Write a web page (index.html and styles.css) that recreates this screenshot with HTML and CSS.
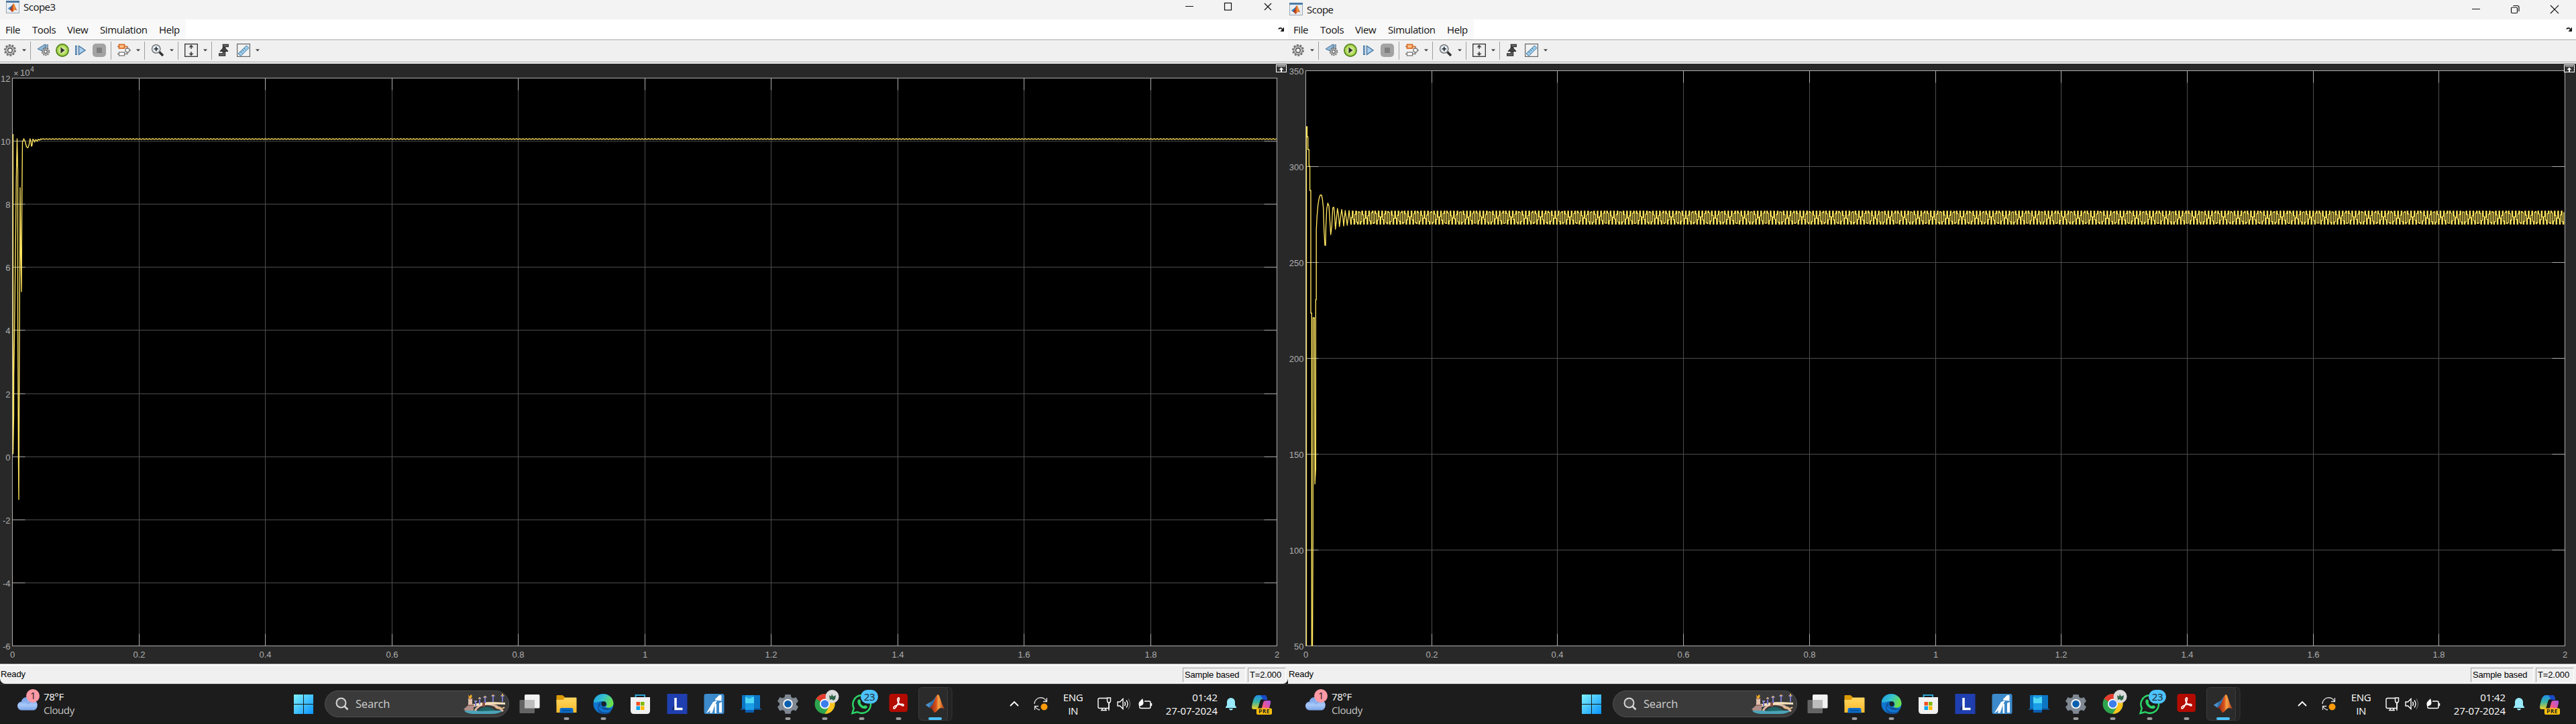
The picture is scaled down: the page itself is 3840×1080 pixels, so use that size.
FILE: index.html
```html
<!DOCTYPE html>
<html lang="en">
<head>
<meta charset="utf-8">
<title>Scopes</title>
<link rel="stylesheet" href="styles.css">
</head>
<body>
<svg class="defs" width="0" height="0" aria-hidden="true">
  <defs>
    <linearGradient id="gWin" x1="0" y1="0" x2="1" y2="1"><stop offset="0" stop-color="#7df3ff"/><stop offset="1" stop-color="#0a93fb"/></linearGradient>
    <linearGradient id="gOrange" x1="0" y1="0" x2="1" y2="0"><stop offset="0" stop-color="#7c1f17"/><stop offset=".45" stop-color="#d9541e"/><stop offset=".6" stop-color="#f9a646"/><stop offset="1" stop-color="#a92a14"/></linearGradient>
    <linearGradient id="gFolder" x1="0" y1="0" x2="0" y2="1"><stop offset="0" stop-color="#ffd860"/><stop offset="1" stop-color="#fcb92c"/></linearGradient>
    <linearGradient id="gEdge" x1="0" y1="0" x2="1" y2=".4"><stop offset="0" stop-color="#1b9de2"/><stop offset=".5" stop-color="#35c1d0"/><stop offset="1" stop-color="#6be04c"/></linearGradient>
    <linearGradient id="gCloud" x1="0" y1="0" x2="0" y2="1"><stop offset="0" stop-color="#6f9be8"/><stop offset=".6" stop-color="#a8c9f8"/><stop offset="1" stop-color="#7ba3e6"/></linearGradient>
    <linearGradient id="gCopA" x1="0" y1="0" x2="0" y2="1"><stop offset="0" stop-color="#1f8fe8"/><stop offset=".5" stop-color="#3db5a0"/><stop offset="1" stop-color="#f3cf1f"/></linearGradient>
    <linearGradient id="gCopB" x1="1" y1="0" x2="0" y2="1"><stop offset="0" stop-color="#a057f0"/><stop offset=".6" stop-color="#f0568d"/><stop offset="1" stop-color="#ff9a4c"/></linearGradient>
    <radialGradient id="gPlay" cx=".5" cy=".5" r=".5"><stop offset="0" stop-color="#f1f8d8"/><stop offset=".7" stop-color="#b4dc5a"/><stop offset="1" stop-color="#7db32a"/></radialGradient>
    <symbol id="membrane" viewBox="0 0 30 28">
      <path d="M0 16 8 11.5 14 8.500 11 17 6 20.500Z" fill="#4a8fc7"/>
      <path d="M8 11.500C12 10 14 5 17.500 1L14.500 13 9.500 20 6 20.500Z" fill="#2f6fa8"/>
      <path d="M6 20.500C10 18 12 14 14 9 16 4 17.500 0 19.500 0 22 0 24 13 30 23 26 20 23 20 20 23 18 25 16 28 13.500 28 12 25 10 21 6 20.500Z" fill="url(#gOrange)"/>
    </symbol>
    <symbol id="appicon" viewBox="0 0 20 19">
      <rect x=".5" y=".5" width="19" height="18" fill="#e9eef3" stroke="#9aa7b3"/>
      <rect x="0" y="0" width="20" height="3" fill="#4b7ba8"/>
      <use href="#membrane" x="2" y="4" width="15" height="13"/>
    </symbol>
    <symbol id="caret" viewBox="0 0 10 10"><path d="M2 3.500h6L5 6.500Z" fill="#333"/></symbol>
    <symbol id="cog" viewBox="0 0 20 20">
      <circle cx="10" cy="10" r="7.800" fill="none" stroke="#6d6d6d" stroke-width="2.200" stroke-dasharray="3 1.900"/>
      <circle cx="10" cy="10" r="6.400" fill="#d4d4d4" stroke="#777" stroke-width="1.200"/>
      <circle cx="10" cy="10" r="3.400" fill="#f4f4f4" stroke="#555" stroke-width="1.600"/>
    </symbol>
  </defs>
</svg>

<main class="desktop">
  <section class="screen" data-scope="current">
    <header class="titlebar titlebar-a">
      <svg class="appicon" width="20" height="19"><use href="#appicon"/></svg>
      <h1>Scope3</h1>
      <svg class="winctl" width="130" height="20" fill="none" stroke="#111" stroke-width="1.200"><path d="M2 9.500h12M120 5l10 10m0-10L120 15"/><rect x="60.500" y="4.500" width="10" height="10.500"/></svg>
    </header>
    <div class="chrome"></div>
    <svg class="plot" viewBox="0 95 1920 895" width="1920" height="895"></svg>
    <footer class="status rounded"><span>Ready</span><span class="cell sample">Sample based</span><span class="cell time">T=2.000</span></footer>
    <div class="taskbar"></div>
  </section>
  <section class="screen" data-scope="voltage">
    <header class="titlebar titlebar-b">
      <svg class="appicon" width="20" height="19"><use href="#appicon"/></svg>
      <h1>Scope</h1>
      <svg class="winctl" width="130" height="20" fill="none" stroke="#111" stroke-width="1.200"><path d="M2 9.500h12M119 4l12 12m0-12L119 16M63.500 4.500h6q2.500 0 2.500 2.500v6"/><rect x="60.500" y="7" width="9" height="8.500" rx="1.500"/></svg>
    </header>
    <div class="chrome"></div>
    <svg class="plot" viewBox="0 95 1920 895" width="1920" height="895"></svg>
    <footer class="status"><span>Ready</span><span class="cell sample">Sample based</span><span class="cell time">T=2.000</span></footer>
    <div class="taskbar"></div>
  </section>
</main>

<template id="chrome">
  <nav class="menubar">
    <ul><li class="m-file">File</li><li class="m-tools">Tools</li><li class="m-view">View</li><li class="m-sim">Simulation</li><li>Help</li></ul>
    <svg class="dock" width="10" height="8"><path d="M1 3.500C2.500 1 5 1.500 6.500 3.500" fill="none" stroke="#111" stroke-width="1.800"/><path d="M9 .5V7H3.500Z" fill="#111"/></svg>
  </nav>
  <div class="toolbar">
    <svg width="20" height="20"><use href="#cog"/></svg>
    <svg class="caret" width="10" height="10"><use href="#caret"/></svg>
    <i class="sep"></i>
    <div class="group">
      <svg width="20" height="20"><path d="M1 8 12 1v12Z" fill="#8fb8d8" stroke="#50789c"/><path d="M13.500 1v10M16 1v8" stroke="#50789c" stroke-width="1.500"/><use href="#cog" x="6" y="5" width="14" height="14"/></svg>
      <svg width="20" height="20"><circle cx="10" cy="10" r="9.200" fill="url(#gPlay)" stroke="#4d7d1c" stroke-width="1.500"/><path d="M7.500 5.500v9l6-4.500Z" fill="#333"/></svg>
      <svg width="20" height="20"><path d="M7.500 3.500 17 10 7.500 16.500Z" fill="#a9cfee" stroke="#3f6f9c" stroke-width="1.300"/><path d="M3.500 3v14" stroke="#3f6f9c" stroke-width="3"/><path d="M3.500 4v12" stroke="#a9cfee"/></svg>
      <svg width="20" height="20"><rect width="20" height="20" rx="5" fill="#a3a3a3"/><rect x="6" y="6" width="8" height="8" fill="#7f7f7f"/></svg>
    </div>
    <i class="sep after-group"></i>
    <svg width="20" height="20" fill="none" stroke="#777" stroke-width="1.300"><path d="M0 4.500h15v4M0 15.500h15v-4"/><path d="M10 4.500h4.500V8" stroke="#e0702a"/><rect x="2.500" y="1.500" width="8" height="5.500" fill="#ffc58f" stroke="#dd6a1f" stroke-width="1.800"/><rect x="2.500" y="13" width="8" height="5" fill="#fff"/><circle cx="15" cy="10" r="3" fill="#fff"/><path d="M18 10h2"/></svg>
    <svg class="caret" width="10" height="10"><use href="#caret"/></svg>
    <i class="sep"></i>
    <svg width="20" height="20" fill="none"><path d="m12 12 6 6" stroke="#333" stroke-width="3.500"/><circle cx="7.700" cy="8" r="6.200" fill="#e4eff6" stroke="#777" stroke-width="1.500"/><path d="M4.500 8H11M7.700 4.800v6.400" stroke="#222" stroke-width="1.700"/></svg>
    <svg class="caret" width="10" height="10"><use href="#caret"/></svg>
    <i class="sep"></i>
    <svg width="20" height="20"><rect x=".7" y=".7" width="18.600" height="18.600" fill="#eee" stroke="#333" stroke-width="1.300"/><path d="M10 1.500 13.500 5.500h-7ZM10 18.500l3.500-4h-7Z" fill="#444"/><path d="M10 4v4M10 12v4" stroke="#444" stroke-width="1.500"/></svg>
    <svg class="caret" width="10" height="10"><use href="#caret"/></svg>
    <i class="sep"></i>
    <div class="group">
      <svg width="20" height="20" fill="none"><path d="M1 16.500h8V3h7" stroke="#333" stroke-width="4.500"/><path d="M2 16.500h7V3h6" stroke="#777" stroke-width="1.300"/><path d="M3 11.500 9 5l6 6.500Z" fill="#444" stroke="#222"/></svg>
      <svg width="20" height="20"><rect x=".6" y=".6" width="18.800" height="18.800" fill="#f2f2f2" stroke="#666" stroke-width="1.200"/><path d="M2 15 14.500 3 18 6.500 6 18.500Z" fill="#9ccbea" stroke="#42769b"/><path d="m6 12 1.500 1.500m1-4 1.500 1.500M11 7l1.500 1.500" stroke="#2e6288"/></svg>
    </div>
    <svg class="caret" width="10" height="10"><use href="#caret"/></svg>
  </div>
</template>

<template id="taskbar">
  <div class="weather">
    <svg width="35" height="36"><path d="M8 32.500a6.500 6.500 0 0 1-1-13C8 12 20 10 24 18c9-1 9 14.500 0 14.500Z" fill="url(#gCloud)"/><path d="M6 21c5-3 9-1 11 2 2-4 5-4 8-4" fill="none" stroke="#84a9ea" stroke-width="1.500"/><circle cx="24" cy="11" r="10" fill="#ff99a4"/><text x="24" y="16" text-anchor="middle" class="badge">1</text></svg>
    <div><p>78°F</p><p class="dim">Cloudy</p></div>
  </div>
  <div class="apps">
    <svg class="app" viewBox="0 0 55 50"><path d="M13 11h14v14H13zM28 11h14v14H28zM13 26h14v14H13zM28 26h14v14H28z" fill="url(#gWin)"/></svg>
    <div class="search">
      <svg width="20" height="20" fill="none" stroke="#d5d5d5" stroke-width="2"><circle cx="8.500" cy="8.500" r="7" fill="#4c4c4c"/><path d="m13.500 13.500 5 5" stroke-width="2.600"/></svg>
      <span>Search</span>
      <svg class="bridge" width="64" height="32" fill="none">
        <path d="M2 26h58Q54 31 42 31H14Q4 30 2 26Z" fill="#4ba3b8"/>
        <path d="M22 27C28 19 38 18 48 26" fill="#1f6464"/>
        <path d="M18 26C25 14 44 12 60 27" stroke="#e0bba6" stroke-width="3"/>
        <path d="M12 17C26 14 34 12 63 14v3C38 16 26 18 14 21Z" fill="#f8e2bd"/>
        <path d="M48 20c3 4 6 3 8 1M54 20c3 4 6 3 8 1" stroke="#e2b880" stroke-width="2"/>
        <path d="M1 24 8 18h8v8H4Z" fill="#b08e88"/><path d="M8 8h6v10H8Z" fill="#e2c0ac"/><path d="M7 8h8M7 18h10" stroke="#86615a" stroke-width="1.600"/>
        <path d="m8 2 2 3 2-3 2 2-2 4H9Z" fill="#f0ad27"/>
        <path d="M19 13v6M25 10v7M33 7v8M45 5v8M59 5v8" stroke="#7877cc" stroke-width="2"/>
        <path d="M17 12h4M23 8h4M30.500 6h5M42.500 4h5M56.500 4h5" stroke="#9b8fc8" stroke-width="2"/>
        <path d="M45 2v2M33 4v2M25 6v2M59 1v3" stroke="#e9b255" stroke-width="2"/>
        <path d="M29 14h4v6h-4Z" fill="#8c5148"/>
      </svg>
    </div>
    <svg class="app" viewBox="0 0 55 50"><rect x="20" y="11" width="22.500" height="20.500" rx="1.500" fill="#f2f2f2"/><rect x="12.500" y="19" width="22.500" height="20" rx="1.500" fill="#777" fill-opacity=".8"/><path d="M20 19h15v12.500H20z" fill="#bdbdbd"/></svg>
    <svg class="app open" viewBox="0 0 55 50"><path d="M12.500 13q0-1 1-1h8l4 3.500v8h-13Z" fill="#dc9b08"/><path d="M12.500 19H22l3.500-3.500h16q1 0 1 1V38H12.500Z" fill="url(#gFolder)"/><path d="M17.500 38.500V34q0-3 3-3h14q3 0 3 3v4.500Z" fill="#0b6cc9"/><path d="M21 35h13" stroke="#074a91" stroke-width="1.500"/><rect class="dot" x="23.500" y="45" width="8" height="4" rx="2"/></svg>
    <svg class="app open" viewBox="0 0 55 50"><circle cx="27.500" cy="25" r="15" fill="#0f76cf"/><path d="M12.800 22C14.500 6 41 6 42.500 24c0 6-6 8-12 6 4-3 2-9-4-9-8 0-12 4-13.700 1Z" fill="url(#gEdge)"/><path d="M20 29c0 9 13 11 20 6-4 6-11 6-15 4.500C17 37 17 24 25 21.500c-3 2-3 6-1 9 3 4 9 5 16 2" fill="#134f9c"/><circle cx="28" cy="25" r="3.700" fill="#17222c"/><rect class="dot" x="23.500" y="45" width="8" height="4" rx="2"/></svg>
    <svg class="app" viewBox="0 0 55 50"><path d="M20.500 16v-4.200h13.500V16" fill="none" stroke="#2cb9ee" stroke-width="1.800"/><path d="M13 15h29v20q0 5-5 5H18q-5 0-5-5Z" fill="#f1f1f1"/><path d="M21.500 22h5.500v5.500h-5.500z" fill="#f25022"/><path d="M28 22h5.500v5.500H28z" fill="#7fba00"/><path d="M21.500 28.500h5.500V34h-5.500z" fill="#00a4ef"/><path d="M28 28.500h5.500V34H28z" fill="#ffb900"/></svg>
    <svg class="app" viewBox="0 0 55 50"><rect x="12.500" y="10" width="30" height="30" fill="#1f3fb0"/><path d="m20 34 4-10v10Z" fill="#0d2059"/><path d="M25 16v16.500h10.500" fill="none" stroke="#fff" stroke-width="3.500"/></svg>
    <svg class="app" viewBox="0 0 55 50"><rect x="12.500" y="10" width="30" height="30" rx="3" fill="#3c8acb"/><path d="M16 38.500 26 22l6-2-3.500 7-4 11.500h-3.500l1-4-5 4Z" fill="#fff"/><path d="m29 18 6-6h3.500v8.500l-9.500-1Z" fill="#fff"/><path d="M35 24l4-2v16h-4Z" fill="#fff"/><path d="M28.500 25h2.500v14h-2.500Z" fill="#fff"/></svg>
    <svg class="app" viewBox="0 0 55 50"><path d="M14 12h27v20H14Z" fill="#0c76c4"/><path d="M12 32h31v2H12Z" fill="#0e4e91"/><path d="M19 12h13v22H19Z" fill="#1b9de8"/><path d="M19 15h13v9H19Z" fill="#4fd7f5"/><path d="M19 34h13v4H19Z" fill="#0a5bb0"/><path d="M22 16h6" stroke="#087ac5"/></svg>
    <svg class="app open" viewBox="0 0 55 50"><path d="M23.500 11h8l1 4 3 1.600 4-1.500 3.500 6-3 3v2.500l3 3-3.500 6-4-1.500-3 1.600-1 4h-8l-1-4-3-1.600-4 1.500-3.500-6 3-3V24l-3-3 3.500-6 4 1.500 3-1.600Z" fill="#7f8892"/><circle cx="27.500" cy="25" r="7.300" fill="#f0f3f6"/><circle cx="27.500" cy="25" r="5.300" fill="#0c5fae"/><rect class="dot" x="23.500" y="45" width="8" height="4" rx="2"/></svg>
    <svg class="app open" viewBox="0 0 55 50"><circle cx="27.500" cy="25" r="15" fill="#2da54e"/><path d="M27.500 25 14.500 17.500A15 15 0 0 1 40.500 17.500H27.500Z" fill="#e33b2e"/><path d="M27.500 17.500h13A15 15 0 0 1 27.500 40L34 28.700Z" fill="#fcc31e"/><circle cx="27.500" cy="25" r="7.500" fill="#fff"/><circle cx="27.500" cy="25" r="5.800" fill="#3b7ded"/><circle cx="38.500" cy="14" r="10" fill="#dcdcdc"/><path d="m34 12 3 2 1-4 2 4 4-2-1 6-3 2-2-2-3 1Z" fill="#2d6446"/><rect class="dot" x="23.500" y="45" width="8" height="4" rx="2"/></svg>
    <svg class="app open" viewBox="0 0 55 50"><path d="m13.500 39 2.300-7.500A13.300 13.300 0 1 1 21 37Z" fill="none" stroke="#2bd366" stroke-width="2.500"/><path d="M21.500 20c1-3 4-2 4.500 1 .3 2-1 2 0 3.500s2.500 3 4 3.500 2-1.500 4-.5c3 1.300 2 3.500 0 4.500-6 2-14-6-12.500-12Z" fill="#2bd366"/><rect x="26" y="4" width="26" height="20.500" rx="10.200" fill="#4cc2ff"/><text x="39" y="19.500" text-anchor="middle" class="badge">23</text><rect class="dot" x="23.500" y="45" width="8" height="4" rx="2"/></svg>
    <svg class="app open" viewBox="0 0 55 50"><rect x="13.500" y="10" width="27.500" height="27" rx="4" fill="#b30b00"/><path d="M20 31c0-4 15-8 15-4 0 3-10-3-9-9 .7-4 3.500-2 2 2-1.500 5-5 12-7 12q-1 0-1-1Z" fill="none" stroke="#fff" stroke-width="1.700"/><rect class="dot" x="23.500" y="45" width="8" height="4" rx="2"/></svg>
    <svg class="app" viewBox="0 0 55 50"><rect x="5" y=".5" width="47" height="49" rx="5" fill="#232323" stroke="#363636"/><rect x="2.500" y=".5" width="43" height="49" rx="5" fill="#2b2b2b" stroke="#3d3d3d"/><use href="#membrane" x="12.500" y="11" width="29" height="27"/><rect x="17" y="45" width="20" height="4" rx="2" fill="#4cc2ff"/></svg>
  </div>
  <div class="tray">
    <svg class="chev" width="14" height="10"><path d="m1 8 6-6 6 6" fill="none" stroke="#fff" stroke-width="1.800"/></svg>
    <svg class="sync" width="22" height="22" fill="none" stroke="#ddd" stroke-width="1.300"><path d="M1 11a9.500 9.500 0 0 1 18-4M19.500 2v5.500H14M1.500 20v-5.500H7M2 15a9.500 9.500 0 0 0 7 5"/><circle cx="15.500" cy="15.500" r="5" fill="#ff9a0a" stroke="none"/></svg>
    <div class="lang"><p>ENG</p><p>IN</p></div>
    <svg class="net" width="21" height="21" fill="none" stroke="#fff" stroke-width="1.400"><path d="M14 1.500H3q-2 0-2 2v11q0 2 2 2h14V9M5 19.500h9M7 17v2M12 17v2"/><path d="M14.500 1h5v4.500l-1 2.500h-3l-1-2.500ZM17 8v12"/></svg>
    <svg class="vol" width="22" height="20" fill="none" stroke="#fff" stroke-width="1.400"><path d="M1 7h3.500L9 2.500v15L4.500 13H1ZM11.500 7q2 3 0 6M14 4.500q4 5.500 0 11"/><path d="M17 2.500q5 7.500 0 15" stroke="#666"/></svg>
    <svg class="bat" width="22" height="20" fill="none" stroke="#fff" stroke-width="1.500"><path d="M10 6h7q2 0 2 2v6.500q0 2-2 2H5q-2 0-2-1.500M20.500 9v4"/><path d="M2 13C0 7 4 6 7 2c2 5 3 10-3 11l-2 3Z" fill="#fff" stroke="none"/></svg>
    <div class="clock"><p>01:42</p><p>27-07-2024</p></div>
    <svg class="bell" width="16" height="20"><path d="M0 15 2 12V7a6 6 0 0 1 12 0v5l2 3v1H0ZM5 17h6q-.5 2.500-3 2.500T5 17Z" fill="#99ebff"/></svg>
    <svg class="copilot" width="30" height="29"><path d="M0 18C1 10 3 4 5 2q1-2 4-2h10q3 0 4 6H15q-2 0-3 4l-2 7q-1 4-4 4H3q-3 0-3-3Z" fill="url(#gCopA)"/><path d="M13 0h6q3 0 4 7h-6Z" fill="#1847c9"/><path d="M17 11q1-3 4-3h5q3 0 2 4l-2 8q-1 3-4 3h-8Z" fill="url(#gCopB)"/><rect x="7" y="19.500" width="23" height="9.500" rx="2" fill="#ffc20e"/><text x="18.500" y="27.200" text-anchor="middle" class="pre">PRE</text></svg>
  </div>
</template>
<script src="app.js"></script>
</body>
</html>
```
FILE: styles.css
```css
* { box-sizing: border-box; }
body, h1, p, ul { margin: 0; padding: 0; }
body { width: 3840px; height: 1080px; overflow: hidden; background: #1c1c1c; font-family: "Open Sans", "Noto Sans", sans-serif; }
.defs { position: absolute; }
svg { display: block; flex: none; }
.desktop { display: grid; grid-template-columns: 1920px 1920px; }
.screen { display: grid; grid-template-rows: 29px 66px 895px 30px 60px; height: 1080px; overflow: hidden; }

.titlebar { display: flex; align-items: flex-start; background: #f3f3f3; color: #111; }
.titlebar h1 { font-size: 15px; font-weight: 400; line-height: 20px; letter-spacing: -.5px; }
.titlebar .winctl { margin-left: auto; overflow: visible; }
.titlebar-a { padding: 1px 25px 0 9px; }
.titlebar-a h1 { margin: -1px 0 0 6px; }
.titlebar-a .winctl { margin-top: -1px; }
.titlebar-b { padding: 4px 27px 0 2px; }
.titlebar-b h1 { margin: 0 0 0 6px; }

.chrome { display: grid; grid-template-rows: 30px 36px; }
.menubar { display: flex; justify-content: space-between; align-items: center; background: #fff; padding-right: 5px; }
.menubar ul { display: flex; width: 277px; height: 30px; padding-left: 8px; background: #f9f9f9; list-style: none; font-size: 15px; line-height: 31px; letter-spacing: -.4px; color: #111; white-space: nowrap; }
.m-file { width: 40px; }
.m-tools { width: 52px; }
.m-view { width: 49px; }
.m-sim { width: 88px; }
.toolbar { display: flex; align-items: center; height: 36px; padding: 0 0 3px 5px; background: #f0f0f0; border-top: 1px solid #9c9c9c; border-bottom: 2px solid #f8f8f8; box-shadow: inset 0 1px #fff, inset 0 -1px #a0a0a0; }
.toolbar .caret { margin: 0 4px 0 6px; }
.sep { flex: none; width: 1px; height: 27px; margin-right: 9px; background: #a0a0a0; }
.after-group { margin-left: 7px; }
.group { display: flex; gap: 7.67px; }

.plot text { font: 13px "Liberation Sans", Arial, sans-serif; fill: #afafaf; }
.plot .exp { font-size: 10.5px; }
.plot .grid { stroke: #4d4d4d; fill: none; }
.plot .axis { stroke: #afafaf; fill: none; }
.plot .trace { fill: none; stroke: #ffe55f; stroke-width: 1.35; stroke-linejoin: round; }

.status { display: flex; align-items: center; gap: 3px; padding: 3px 3px 0 1px; background: #f0f0f0; border-top: 1px solid #a8a8a8; box-shadow: inset 0 2px #fff; font: 13px "Liberation Sans", Arial, sans-serif; letter-spacing: -.15px; color: #000; }
.status > :first-child { margin-top: -3px; }
.rounded { border-radius: 0 0 8px 8px; }
.cell { height: 22px; padding-left: 2px; line-height: 19px; border: 1px solid; border-color: #a0a0a0 #fff #fff #a0a0a0; white-space: nowrap; }
.sample { width: 94px; margin-left: auto; }
.time { width: 57px; }

.taskbar { display: flex; padding-top: 4px; background: #1c1c1c; border-top: 1px solid #3b3b3b; color: #fff; font-size: 15px; line-height: 20px; white-space: nowrap; }
.weather { display: flex; gap: 5px; width: 425px; padding: 2px 0 0 25px; letter-spacing: -.4px; }
.weather div { padding-top: 2px; }
.dim { color: #c4c4c4; }
.badge { font: 15px "Open Sans", sans-serif; fill: #1c1c1c; letter-spacing: -.4px; }
.apps { display: flex; }
.app { width: 55px; height: 50px; overflow: visible; }
.dot { fill: #9a9a9a; }
.search { display: flex; align-items: center; width: 275px; height: 40px; margin: 5px 2.5px 0 4px; padding: 0 4px 0 15px; border: 1px solid #505050; border-radius: 20px; background: #3a3a3a; font-size: 16.5px; letter-spacing: -.2px; color: #cfcfcf; }
.search span { margin-left: 10px; }
.bridge { margin-left: auto; }
.tray { display: flex; align-items: center; margin-left: auto; padding-right: 24px; height: 50px; }
.tray p { letter-spacing: -.4px; }
.tray .clock p { letter-spacing: -.1px; }
.chev { margin-right: 22px; }
.sync { margin-right: 18px; }
.lang { width: 37px; text-align: center; }
.net { margin-left: 18px; margin-right: 8px; }
.vol { margin-right: 9px; }
.bat { margin-right: 7px; }
.clock { width: 90px; text-align: right; }
.bell { margin: 0 23px 0 12px; }
.copilot { margin-top: 2px; }
.pre { font: 700 8.5px "Open Sans", sans-serif; fill: #222; letter-spacing: .5px; }
```
FILE: app.js
```js
const copy = (id, target) =>
  document.querySelectorAll(target).forEach(el =>
    el.append(document.getElementById(id).content.cloneNode(true)));
copy('chrome', '.chrome');
copy('taskbar', '.taskbar');

const RIGHT = 1903.5, BOTTOM = 963.5;

function drawPlot(svg, o) {
  const n = o.labels.length - 1;
  const dx = (RIGHT - o.left) / 10, dy = (BOTTOM - o.top) / n;
  let grid = '', ticks = '', text = '';
  for (let i = 0; i <= 10; i++) {
    const x = Math.floor(o.left + i * dx) + .5;
    if (i && i < 10) {
      grid += `M${x} ${o.top}V${BOTTOM}`;
      ticks += `M${x} ${o.top}v18M${x} ${BOTTOM}v-18`;
    }
    text += `<text x="${x}" y="981" text-anchor="middle">${+(i * .2).toFixed(1)}</text>`;
  }
  o.labels.forEach((label, i) => {
    const y = Math.floor(o.top + i * dy) + .5;
    if (i && i < n) {
      grid += `M${o.left} ${y}H${RIGHT}`;
      ticks += `M${o.left} ${y}h19M${RIGHT} ${y}h-19`;
    }
    text += `<text x="${o.labelX}" y="${y + 5.5}" text-anchor="end">${label}</text>`;
  });
  svg.innerHTML = `
    <rect y="95" width="1920" height="895" fill="#282828"/>
    <rect x="${o.left}" y="${o.top}" width="${RIGHT - o.left}" height="${BOTTOM - o.top}" fill="#000"/>
    <path class="grid" d="${grid}"/><path class="axis" d="${ticks}"/>
    <rect class="axis" x="${o.left}" y="${o.top}" width="${RIGHT - o.left}" height="${BOTTOM - o.top}"/>
    <path class="trace" d="${o.trace}"/>${text}${o.extra || ''}
    <rect x="1902.500" y="96.500" width="15" height="11" fill="#333" stroke="#fff"/>
    <path d="M1904 98.500h12" stroke="#aaa" stroke-width="2"/>
    <path d="M1906.500 104l3.500-3.500 3.500 3.500ZM1909 103h2v4h-2Z" fill="#fff"/>`;
}

// Start-up transient followed by a settled ripple.
let current = 'M19.5 200V677L20.500 620 20.600 560 21.500 502 22.200 445 22.800 394 23.500 342 24.200 270 25.500 207 26.500 255V470L27.500 689 28 745 28.600 597 29.500 400 30 280 31 382 32 435 32.700 295 33.500 212 35.500 207 37.500 211 39.500 219 41.500 220.500 43.300 216 44.800 207 46 210 46.800 218 47.800 217 49 207.500 50.500 209 51.500 212 53.500 208 55.500 211 57 207.500 59 209 61 207';
for (let x = 62, k = 0; x < RIGHT; x += 2.400, k++) current += `L${x.toFixed(1)} ${k % 2 ? 206.800 : 208}`;

let voltage = 'M27.500 963V189H28.500V204H29.700V223H31.300V248H32.600V284H34V467H35.300V963H36.500L37.300 790V474H39.300V491L40 722 41.300 700V447H42.200V343L43.300 322 44.700 306 46.300 296 48 291 50 291 51.300 297 52.700 310 53.700 343 55 366H56L56.500 338 57.700 312 59.300 303 61 307 62.300 327 63.700 350 65.300 337 66.700 310 68.300 309 69.700 323 70.700 342 72.300 327 73.700 311 75.300 320 76.700 338 79 320 80 312.500 81.700 323 83 337 85.300 314 88.300 336 91 314 93.700 334.500';
for (let x = 94.500; x < RIGHT - .5; x += 1.290) {
  const wave = Math.cos((x - 95.700) * 2 * Math.PI / 4.870);
  const y = 324.500 - Math.max(-9.700, Math.min(9.700, 12.500 * wave));
  voltage += `H${x.toFixed(2)}V${y.toFixed(1)}`;
}

const [a, b] = document.querySelectorAll('.plot');
drawPlot(a, {
  left: 18.5, top: 116.5, labelX: 15.5, labels: [12, 10, 8, 6, 4, 2, 0, -2, -4, -6], trace: current,
  extra: '<text x="20" y="114">×</text><text x="30" y="113">10</text><text class="exp" x="45" y="107">4</text>'
});
drawPlot(b, { left: 26.5, top: 105.5, labelX: 23.5, labels: [350, 300, 250, 200, 150, 100, 50], trace: voltage });
```
